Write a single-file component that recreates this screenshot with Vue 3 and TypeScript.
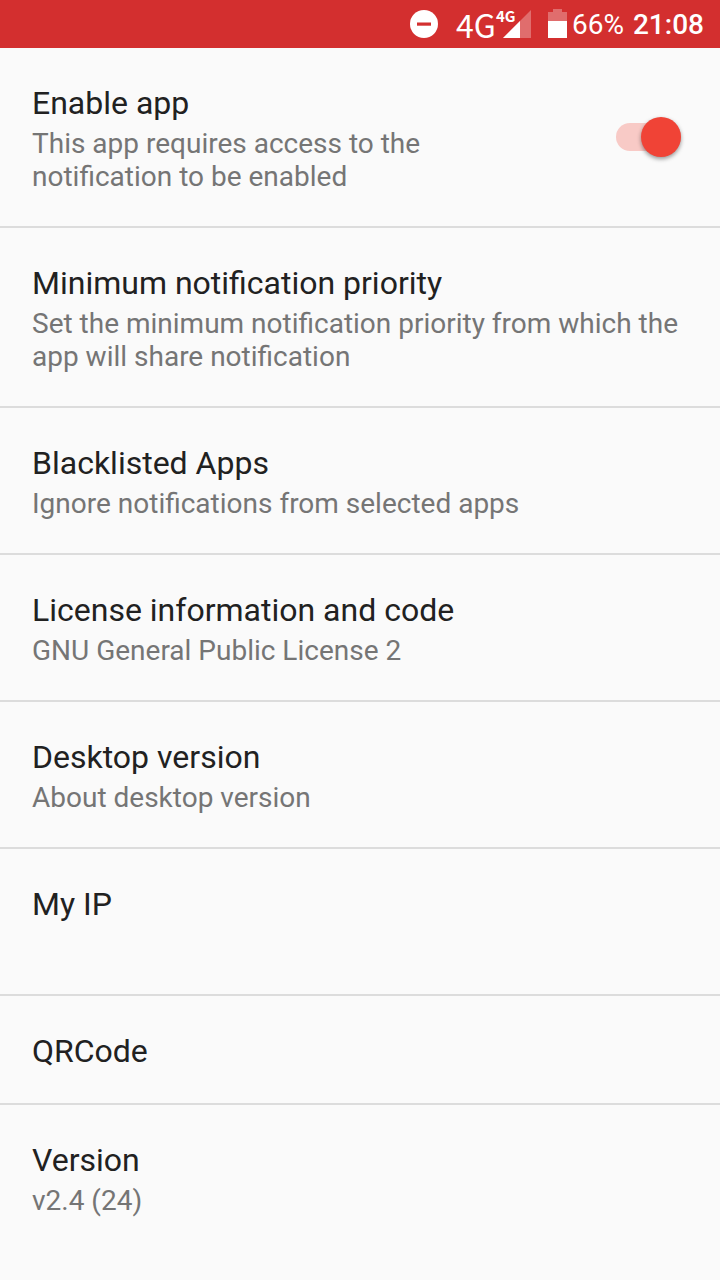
<script setup lang="ts">
import { ref } from 'vue'

interface Preference {
  title: string
  summary?: string
}

const enabled = ref(true)

const preferences: Preference[] = [
  {
    title: 'Minimum notification priority',
    summary: 'Set the minimum notification priority from which the app will share notification',
  },
  { title: 'Blacklisted Apps', summary: 'Ignore notifications from selected apps' },
  { title: 'License information and code', summary: 'GNU General Public License 2' },
  { title: 'Desktop version', summary: 'About desktop version' },
  { title: 'My IP', summary: '' },
  { title: 'QRCode' },
  { title: 'Version', summary: 'v2.4 (24)' },
]
</script>

<template>
  <div class="screen">
    <header class="status-bar">
      <svg class="dnd" width="28" height="28" viewBox="0 0 28 28" aria-label="Do not disturb">
        <circle cx="14" cy="14" r="14" fill="#fff" />
        <rect x="7" y="12.5" width="14" height="3.2" fill="#d32f2f" />
      </svg>
      <div class="network">
        <span class="network-type">4G</span>
        <span class="network-badge">4G</span>
        <svg class="signal" width="28" height="28" viewBox="0 0 28 28" aria-label="Signal strength">
          <path d="M28 0V28H0Z" fill="#fff" fill-opacity="0.3" />
          <path d="M17 11V28H0Z" fill="#fff" />
        </svg>
      </div>
      <svg class="battery" width="19" height="29" viewBox="0 0 19 29" aria-label="Battery">
        <path d="M5 0H14V3H19V12H0V3H5Z" fill="#fff" fill-opacity="0.3" />
        <rect y="12" width="19" height="17" fill="#fff" />
      </svg>
      <span class="percent">66%</span>
      <time class="clock">21:08</time>
    </header>

    <main class="list">
      <label class="row" for="enable-app">
        <span class="text">
          <span class="title">Enable app</span>
          <span class="summary">This app requires access to the notification to be enabled</span>
        </span>
        <input id="enable-app" v-model="enabled" class="switch" type="checkbox" role="switch" />
      </label>
      <button v-for="item in preferences" :key="item.title" class="row" type="button">
        <span class="text">
          <span class="title">{{ item.title }}</span>
          <span v-if="item.summary !== undefined" class="summary">{{ item.summary }}</span>
        </span>
      </button>
    </main>
  </div>
</template>

<style>
body {
  background: #fafafa;
}
</style>

<style scoped>
.screen {
  min-height: 100vh;
  background: #fafafa;
  font-family: Roboto, "Liberation Sans", sans-serif;
}

.status-bar {
  display: flex;
  align-items: center;
  justify-content: flex-end;
  box-sizing: border-box;
  height: 48px;
  padding-right: 16px;
  background: #d32f2f;
  color: #fff;
  font-size: 28px;
  line-height: 48px;
}

.status-bar svg {
  display: block;
  flex: none;
}

.network {
  position: relative;
  display: flex;
  align-items: center;
  width: 75px;
  margin-left: 18px;
  font-family: "Noto Sans CJK JP", "Noto Sans", sans-serif;
}

.network-type {
  font-size: 32px;
}

.network-badge {
  position: absolute;
  top: 8px;
  left: 40px;
  font-size: 15px;
  font-weight: 700;
  line-height: 15px;
}

.signal {
  margin-left: auto;
}

.battery {
  margin-bottom: 1px;
  margin-left: 17px;
}

.percent {
  padding-top: 2px;
  margin-left: 5px;
}

.clock {
  padding-top: 2px;
  margin-left: 9px;
  font-weight: 500;
}

.row {
  display: flex;
  align-items: center;
  box-sizing: border-box;
  width: 100%;
  margin: 0;
  padding: 36px 32px 33px;
  border: 0;
  border-bottom: 2px solid #dcdcdc;
  background: none;
  font-family: inherit;
  text-align: left;
  cursor: pointer;
}

.row:last-child {
  border-bottom: 0;
}

.text {
  display: flex;
  flex: 1;
  flex-direction: column;
  gap: 5px;
  min-width: 0;
}

.title {
  color: #212121;
  font-size: 32px;
  line-height: 38px;
}

.summary {
  min-height: 33px;
  color: #757575;
  font-size: 28px;
  line-height: 33px;
}

.switch {
  position: relative;
  flex: none;
  width: 65px;
  height: 40px;
  margin: 0 7px 4px 64px;
  appearance: none;
  cursor: pointer;
}

.switch::before {
  content: "";
  position: absolute;
  top: 6px;
  right: 0;
  left: 0;
  height: 28px;
  border-radius: 14px;
  background: #bdbdbd;
}

.switch::after {
  content: "";
  position: absolute;
  top: 0;
  left: 0;
  width: 40px;
  height: 40px;
  border-radius: 50%;
  background: #f1f1f1;
  box-shadow: 0 2px 4px rgba(0, 0, 0, 0.4);
}

.switch:checked::before {
  background: #f8cac6;
}

.switch:checked::after {
  right: 0;
  left: auto;
  background: #f04336;
}
</style>
